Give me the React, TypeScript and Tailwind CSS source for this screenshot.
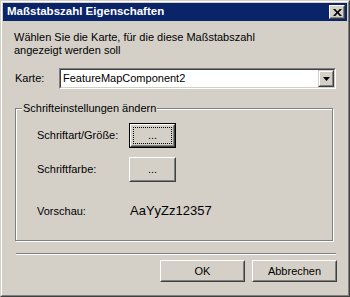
import type { ReactNode } from "react";

function Raised({ children, className = "" }: { children?: ReactNode; className?: string }) {
  return (
    <div className={`border border-t-white border-l-white border-r-[#404040] border-b-[#404040] bg-[#d4d0c8] ${className}`}>
      <div className="flex h-full w-full items-center justify-center border border-t-[#d4d0c8] border-l-[#d4d0c8] border-r-[#808080] border-b-[#808080]">
        {children}
      </div>
    </div>
  );
}

function CloseIcon() {
  return (
    <svg width="9" height="7" viewBox="0 0 9 7">
      <path d="M0 0h2.3l2.2 2.5L6.7 0H9L5.7 3.5 9 7H6.7L4.5 4.5 2.3 7H0l3.3-3.5z" fill="#000" />
    </svg>
  );
}

function ComboArrow() {
  return (
    <svg width="7" height="4" viewBox="0 0 7 4">
      <path d="M0 0h7L3.5 4z" fill="#000" />
    </svg>
  );
}

export default function App() {
  return (
    <div className="h-[297px] w-[350px] border border-t-[#d4d0c8] border-l-[#d4d0c8] border-r-[#404040] border-b-[#404040] bg-[#d4d0c8] font-['Liberation_Sans',Arial,sans-serif] text-[11px] text-black">
      <div className="flex h-full flex-col border border-t-white border-l-white border-r-[#808080] border-b-[#808080] p-px">
        {/* title bar */}
        <div className="flex h-[18px] shrink-0 items-center justify-between bg-[#0a246a] pl-[4px] pr-[2px]">
          <span className="text-[11.5px] font-bold text-white">Maßstabszahl Eigenschaften</span>
          <Raised className="h-[14px] w-[16px]">
            <CloseIcon />
          </Raised>
        </div>

        <p className="ml-[11px] mt-[10px] w-[260px] leading-[13px]">
          Wählen Sie die Karte, für die diese Maßstabszahl angezeigt werden soll
        </p>

        <div className="ml-[12px] mt-[11px] flex items-center">
          <span className="w-[44px]">Karte:</span>
          <div className="h-[21px] w-[277px] border border-t-[#808080] border-l-[#808080] border-r-white border-b-white">
            <div className="flex h-full items-center border border-t-[#404040] border-l-[#404040] border-r-[#d4d0c8] border-b-[#d4d0c8] bg-white">
              <span className="flex-1 pl-[2px]">FeatureMapComponent2</span>
              <div className="h-full w-[16px] border border-t-[#d4d0c8] border-l-[#d4d0c8] border-r-[#404040] border-b-[#404040] bg-[#d4d0c8]">
                <div className="flex h-full items-center justify-center border border-t-white border-l-white border-r-[#808080] border-b-[#808080]">
                  <ComboArrow />
                </div>
              </div>
            </div>
          </div>
        </div>

        {/* group box */}
        <div className="relative ml-[12px] mt-[19px] h-[133px] w-[318px] border border-[#808080] shadow-[1px_1px_0_#fff,inset_1px_1px_0_#fff]">
          <span className="absolute left-[6px] top-[-8px] bg-[#d4d0c8] px-px leading-[14px]">
            Schrifteinstellungen ändern
          </span>
          <div className="flex flex-col pl-[21px] pt-[14px]">
            <div className="flex items-center">
              <span className="w-[92px]">Schriftart/Größe:</span>
              <div className="relative h-[25px] w-[47px] border border-black">
                <Raised className="h-full w-full">
                  <span className="leading-none">...</span>
                </Raised>
                <div className="absolute inset-[3px] border border-dotted border-black" />
              </div>
            </div>
            <div className="mt-[9px] flex items-center">
              <span className="w-[92px]">Schriftfarbe:</span>
              <Raised className="h-[25px] w-[47px]">
                <span className="leading-none">...</span>
              </Raised>
            </div>
            <div className="mt-[19px] flex h-[20px] items-center">
              <span className="w-[93px]">Vorschau:</span>
              <span className="text-[13px]">AaYyZz12357</span>
            </div>
          </div>
        </div>

        <div className="ml-[13px] mt-[12px] h-[2px] w-[320px] border-t border-t-[#808080] border-b border-b-white" />

        <div className="mt-[5px] flex justify-end gap-[7px] pr-[10px]">
          <Raised className="h-[22px] w-[85px]">
            <span>OK</span>
          </Raised>
          <Raised className="h-[22px] w-[85px]">
            <span>Abbrechen</span>
          </Raised>
        </div>
      </div>
    </div>
  );
}
